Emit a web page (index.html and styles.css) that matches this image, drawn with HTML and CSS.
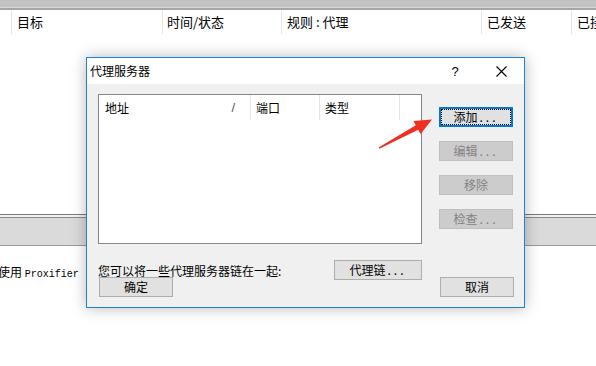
FILE: index.html
```html
<!DOCTYPE html>
<html>
<head>
<meta charset="utf-8">
<link rel="stylesheet" href="styles.css">
</head>
<body>
<div class="app">
  <div class="topbar"></div>
  <div class="cols">
    <div class="col c0"></div>
    <div class="col c1">目标</div>
    <div class="col c2">时间/状态</div>
    <div class="col c3">规则 : 代理</div>
    <div class="col c4">已发送</div>
    <div class="col c5">已接收</div>
  </div>
  <div class="content"></div>
  <div class="panel"></div>
  <div class="status">使用 <span class="mono">Proxifier :</span></div>
</div>

<div class="dialog">
  <div class="titlebar">
    <span class="title">代理服务器</span>
    <span class="tbtn help">?</span>
    <span class="tbtn close">
      <svg width="11" height="11" viewBox="0 0 11 11"><path d="M0.5 0.5 L10.5 10.5 M10.5 0.5 L0.5 10.5" stroke="#000" stroke-width="1.1" fill="none"/></svg>
    </span>
  </div>
  <div class="dbody">
    <div class="toprow">
      <div class="list">
        <div class="lhead">
          <div class="lcol l1"><span>地址</span><span class="sort">/</span></div>
          <div class="lcol l2">端口</div>
          <div class="lcol l3">类型</div>
        </div>
      </div>
      <div class="btncol">
        <div class="btn focus">添加<span class="dots">...</span></div>
        <div class="btn disabled">编辑<span class="dots">...</span></div>
        <div class="btn disabled">移除</div>
        <div class="btn disabled">检查<span class="dots">...</span></div>
      </div>
    </div>
    <div class="chainrow">
      <span class="chaintext">您可以将一些代理服务器链在一起:</span>
      <div class="btn chain">代理链<span class="dots">...</span></div>
    </div>
    <div class="okrow">
      <div class="btn ok">确定</div>
      <div class="btn cancel">取消</div>
    </div>
  </div>
</div>

<svg class="arrow" width="596" height="366" viewBox="0 0 596 366">
  <polygon points="378.6,147.4 415.8,125.3 413.4,120.9 432,119.5 420.6,134.1 418.2,129.7 379.4,148.8" fill="#ee2f22"/>
</svg>
</body>
</html>
```

FILE: styles.css
```css
html, body {
  margin: 0;
  padding: 0;
}
body {
  width: 596px;
  height: 366px;
  overflow: hidden;
  background: #ffffff;
  font-family: "Noto Sans CJK SC", "Microsoft YaHei", sans-serif;
  font-size: 12px;
  color: #000;
  position: relative;
}
.app {
  display: flex;
  flex-direction: column;
}
.topbar {
  height: 10px;
  background: linear-gradient(#c2c2c2 0 7px, #d8d8d8 7px 8px, #a6a6a6 8px 10px);
}
.cols {
  display: flex;
  height: 24px;
}
.col {
  box-sizing: border-box;
  border-right: 1px solid #e6e6e6;
  padding-left: 5px;
  font-size: 13px;
  line-height: 24px;
  white-space: nowrap;
  overflow: hidden;
  flex: none;
}
.c0 { width: 12px; padding: 0; }
.c1 { width: 151px; }
.c2 { width: 119px; padding-left: 4px; }
.c3 { width: 200px; }
.c4 { width: 90px; }
.c5 { width: 60px; border-right: none; }
.content {
  height: 180px;
}
.panel {
  height: 33px;
  background: linear-gradient(#7a7a7a 0 1px, #f2f2f2 1px 3px, #8a8a8a 3px 4px, #dadada 4px 31px, #9a9a9a 31px 32px, #ffffff 32px);
}
.status {
  margin-top: 18px;
  margin-left: -2px;
  font-size: 12px;
  line-height: 14px;
  white-space: nowrap;
}
.mono {
  font-family: "Liberation Mono", monospace;
  font-size: 10px;
}

.dialog {
  position: absolute;
  left: 86px;
  top: 57px;
  width: 439px;
  height: 251px;
  box-sizing: border-box;
  border: 1px solid #1883d7;
  background: #f0f0f0;
  box-shadow: 0 0 14px rgba(0,0,0,0.28);
  display: flex;
  flex-direction: column;
}
.titlebar {
  height: 26px;
  background: #fff;
  display: flex;
  align-items: center;
  flex: none;
}
.title {
  padding-left: 3px;
  line-height: 26px;
  flex: 1;
}
.tbtn {
  width: 46px;
  height: 26px;
  display: flex;
  align-items: center;
  justify-content: center;
}
.help {
  font-family: "Liberation Sans", sans-serif;
  font-size: 13px;
}
.dbody {
  padding: 10px 10px 0 11px;
  display: flex;
  flex-direction: column;
}
.toprow {
  display: flex;
}
.list {
  width: 324px;
  height: 150px;
  box-sizing: border-box;
  border: 1px solid #828790;
  background: #fff;
}
.lhead {
  display: flex;
  height: 25px;
}
.lcol {
  box-sizing: border-box;
  border-right: 1px solid #e5e5e5;
  line-height: 25px;
  padding-left: 5px;
  flex: none;
}
.l1 {
  width: 152px;
  padding-left: 6px;
  display: flex;
  justify-content: space-between;
  padding-right: 15px;
}
.sort {
  color: #555;
  font-family: "Liberation Sans", sans-serif;
  font-size: 13px;
}
.l2 { width: 69px; }
.l3 { width: 80px; }
.btncol {
  margin-left: 17px;
  padding-top: 13px;
  display: flex;
  flex-direction: column;
  gap: 14px;
}
.btn {
  width: 74px;
  height: 20px;
  box-sizing: border-box;
  border: 1px solid #adadad;
  background: #e1e1e1;
  display: flex;
  align-items: center;
  justify-content: center;
  line-height: 18px;
  position: relative;
  white-space: nowrap;
}
.dots {
  letter-spacing: 3px;
  margin-left: 2px;
}
.btn.focus {
  border: 2px solid #0078d7;
}
.btn.focus::after {
  content: "";
  position: absolute;
  left: 0;
  top: 0;
  right: 0;
  bottom: 0;
  border: 1px dotted #000;
}
.btn.disabled {
  background: #cccccc;
  border-color: #bfbfbf;
  color: #838383;
}
.chainrow {
  margin-top: 16px;
  width: 324px;
  display: flex;
  align-items: center;
  justify-content: space-between;
}
.btn.chain {
  width: 88px;
}
.okrow {
  margin-top: -3px;
  display: flex;
}
.btn.ok {
  margin-left: 1px;
}
.btn.cancel {
  margin-left: auto;
}
.arrow {
  position: absolute;
  left: 0;
  top: 0;
  pointer-events: none;
}
```
